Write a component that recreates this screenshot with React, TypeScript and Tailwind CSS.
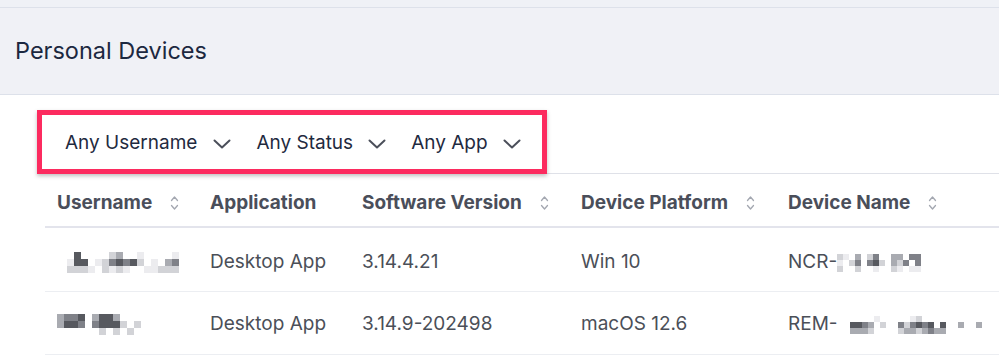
import React from "react";

const SHADES: Record<string, string> = {
  "1": "#ececef",
  "2": "#d2d3d7",
  "3": "#a9abb1",
  "4": "#7f8188",
  "5": "#57595f",
};

// pixelated (redacted) text, one string per row of cells
function Redacted({ rows, cell = 7 }: { rows: string[]; cell?: number }) {
  return (
    <div className="inline-flex flex-col align-middle">
      {rows.map((r, i) => (
        <div key={i} className="flex">
          {r.split("").map((c, j) => (
            <span
              key={j}
              style={{
                width: cell,
                height: cell,
                background: SHADES[c] ?? "transparent",
              }}
            />
          ))}
        </div>
      ))}
    </div>
  );
}

function Chevron() {
  return (
    <svg width="18" height="10" viewBox="0 0 18 10" fill="none">
      <path d="M1.5 1.5l7.5 7 7.5-7" stroke="#4b4f5a" strokeWidth="2" strokeLinecap="round" strokeLinejoin="round" />
    </svg>
  );
}

function SortIcon() {
  return (
    <svg width="9" height="16" viewBox="0 0 9 16" fill="none" className="ml-[18px]">
      <path d="M1.5 5.5l3-3.5 3 3.5" stroke="#a3a7b0" strokeWidth="1.3" strokeLinecap="round" strokeLinejoin="round" />
      <path d="M1.5 10.5l3 3.5 3-3.5" stroke="#a3a7b0" strokeWidth="1.3" strokeLinecap="round" strokeLinejoin="round" />
    </svg>
  );
}

const columns = [
  { label: "Username", sort: true, w: "w-[153px]" },
  { label: "Application", sort: false, w: "w-[152px]" },
  { label: "Software Version", sort: true, w: "w-[219px]" },
  { label: "Device Platform", sort: true, w: "w-[207px]" },
  { label: "Device Name", sort: true, w: "flex-1" },
];

export default function App() {
  return (
    <div className="w-[999px] h-[358px] overflow-hidden bg-white font-['Inter',sans-serif]">
      <div className="h-[8px] bg-[#eff1f6] border-b border-[#dde1ea]" />
      <div className="h-[87px] bg-[#f0f1f6] border-b border-[#dde1ea] flex items-center pl-[15px]">
        <h1 className="text-[23.5px] text-[#1c2840]">Personal Devices</h1>
      </div>

      <div className="ml-[37px] mt-[15px] w-[510px] h-[64px] border-[5px] border-[#fc2b5f] bg-white shadow-[0_2px_4px_rgba(0,0,0,0.25)] flex items-center pl-[23px] pt-[3px] text-[19px] text-[#1f2a40] relative z-10">
        <span>Any Username</span>
        <span className="ml-[16px]"><Chevron /></span>
        <span className="ml-[25px]">Any Status</span>
        <span className="ml-[15px]"><Chevron /></span>
        <span className="ml-[25px]">Any App</span>
        <span className="ml-[15px]"><Chevron /></span>
      </div>

      <div className="ml-[45px] border-t border-[#dfe1e8] -mt-[1px]">
        <div className="flex h-[54px] items-center pt-[6px] border-b-2 border-[#e3e4ec] text-[19px] font-bold text-[#4a4e5a]">
          {columns.map((c) => (
            <div key={c.label} className={`${c.w} flex items-center pl-[12px]`}>
              {c.label}
              {c.sort && <SortIcon />}
            </div>
          ))}
        </div>

        <div className="flex h-[64px] items-center pt-[6px] border-b border-[#eceef2] text-[19px] text-[#4b4f58]">
          <div className="w-[153px] pl-[8px] flex items-center">
            <Redacted
              rows={[
                "...5....23..1....1",
                "..155.1245452.1.34",
                "..2221.2121..11222",
              ]}
              cell={7}
            />
          </div>
          <div className="w-[152px] pl-[12px]">Desktop App</div>
          <div className="w-[219px] pl-[12px]">3.14.4.21</div>
          <div className="w-[207px] pl-[12px]">Win 10</div>
          <div className="flex-1 pl-[12px] flex items-center">
            NCR-
            <Redacted
              rows={[
                "21.3.24..33.44",
                "1.24.452.324.4",
                "2..2..1..21.11",
              ]}
              cell={6}
            />
          </div>
        </div>

        <div className="flex h-[63px] items-center pt-[3px] border-b border-[#eceef2] text-[19px] text-[#4b4f58]">
          <div className="w-[153px] pl-[12px] flex items-center">
            <Redacted
              rows={[
                "3445.3553....",
                "3554.45552.2.",
                "......2.2.2..",
              ]}
              cell={7}
            />
          </div>
          <div className="w-[152px] pl-[12px]">Desktop App</div>
          <div className="w-[219px] pl-[12px]">3.14.9-202498</div>
          <div className="w-[207px] pl-[12px]">macOS 12.6</div>
          <div className="flex-1 pl-[12px] flex items-center">
            REM-
            <Redacted
              rows={[
                "......1.....12...........",
                "..5543.2..42454565..3..3.",
                "..3332....23323433.......",
              ]}
              cell={6}
            />
          </div>
        </div>
      </div>
    </div>
  );
}
